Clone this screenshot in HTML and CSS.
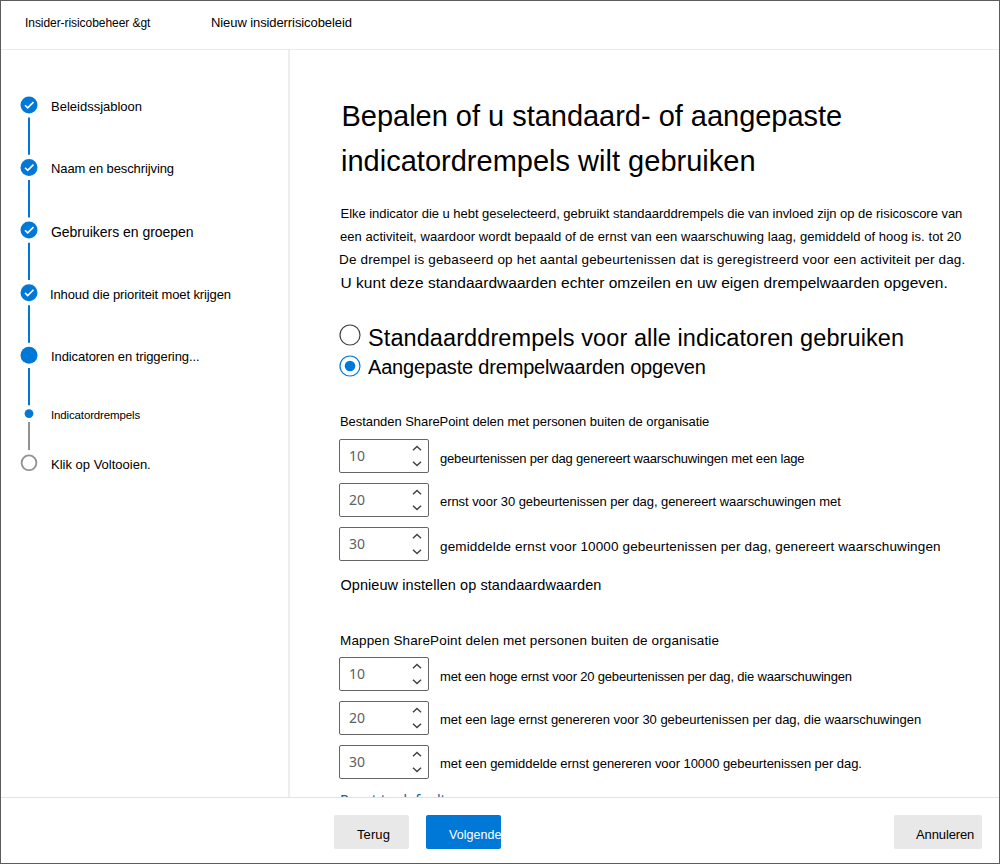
FILE: index.html
```html
<!DOCTYPE html>
<html lang="nl">
<head>
<meta charset="utf-8">
<title>Nieuw insiderrisicobeleid</title>
<link rel="stylesheet" href="styles.css">
</head>
<body>
<div class="frame">
  <header class="top"><span class="t crumb">Insider-risicobeheer &amp;gt</span><span class="t current">Nieuw insiderrisicobeleid</span></header>
  <div class="body">
    <nav class="side">
      <svg class="rail" width="18" height="380" viewBox="20 96 18 380">
        <g fill="#0078d7"><circle cx="29" cy="105" r="8.5"/><circle cx="29" cy="167.5" r="8.5"/><circle cx="29" cy="230" r="8.5"/><circle cx="29" cy="292.7" r="8.5"/><circle cx="29" cy="355.3" r="8.5"/><circle cx="29" cy="413.6" r="4.4"/></g>
        <path d="M29 117.5V154.7M29 180V217.4M29 242.7V280M29 305.2V342.7M29 368V405.2" stroke="#0078d7" stroke-width="2"/>
        <path d="M29 422V450" stroke="#919191" stroke-width="2"/>
        <circle cx="29" cy="462.8" r="7.4" fill="#fff" stroke="#919191" stroke-width="1.8"/>
        <path d="M25 105.2l2.7 2.7 5.8-5.8M25 167.7l2.7 2.7 5.8-5.8M25 230.2l2.7 2.7 5.8-5.8M25 292.9l2.7 2.7 5.8-5.8" fill="none" stroke="#fff" stroke-width="1.6"/>
      </svg>
      <ul class="steps">
        <li><span class="t s1">Beleidssjabloon</span></li>
        <li class="tall"><span class="t s2">Naam en beschrijving</span></li>
        <li class="large"><span class="t s3">Gebruikers en groepen</span></li>
        <li><span class="t s4">Inhoud die prioriteit moet krijgen</span></li>
        <li class="short"><span class="t s5">Indicatoren en triggering...</span></li>
        <li class="sub"><span class="t s6">Indicatordrempels</span></li>
        <li><span class="t s7">Klik op Voltooien.</span></li>
      </ul>
    </nav>
    <main class="main">
      <h1><span class="t h1a">Bepalen of u standaard- of aangepaste</span><br><span class="t h1b">indicatordrempels wilt gebruiken</span></h1>
      <p class="intro">
        <span class="t p1">Elke indicator die u hebt geselecteerd, gebruikt standaarddrempels die van invloed zijn op de risicoscore van</span>
        <span class="t p2">een activiteit, waardoor wordt bepaald of de ernst van een waarschuwing laag, gemiddeld of hoog is. tot 20</span>
        <span class="t p3">De drempel is gebaseerd op het aantal gebeurtenissen dat is geregistreerd voor een activiteit per dag.</span>
        <span class="t p4">U kunt deze standaardwaarden echter omzeilen en uw eigen drempelwaarden opgeven.</span>
      </p>
      <div class="choice"><svg width="22" height="22" viewBox="0 0 22 22"><circle cx="11" cy="11" r="10" fill="#fff" stroke="#444" stroke-width="1.2"/></svg><span class="t r1">Standaarddrempels voor alle indicatoren gebruiken</span></div>
      <div class="choice"><svg width="22" height="22" viewBox="0 0 22 22"><circle cx="11" cy="11" r="10" fill="#fff" stroke="#0078d7" stroke-width="1.2"/><circle cx="11" cy="11" r="5.3" fill="#0078d7"/></svg><span class="t r2">Aangepaste drempelwaarden opgeven</span></div>
      <h2 class="g1"><span class="t q1">Bestanden SharePoint delen met personen buiten de organisatie</span></h2>
      <div class="row"><div class="spin">10<svg width="10" height="22" viewBox="0 0 10 22"><path d="M1 5.3L5 1.5 9 5.3M1 16.7L5 20.5 9 16.7"/></svg></div><span class="t a1">gebeurtenissen per dag genereert waarschuwingen met een lage</span></div>
      <div class="row"><div class="spin">20<svg width="10" height="22" viewBox="0 0 10 22"><path d="M1 5.3L5 1.5 9 5.3M1 16.7L5 20.5 9 16.7"/></svg></div><span class="t a2">ernst voor 30 gebeurtenissen per dag, genereert waarschuwingen met</span></div>
      <div class="row"><div class="spin">30<svg width="10" height="22" viewBox="0 0 10 22"><path d="M1 5.3L5 1.5 9 5.3M1 16.7L5 20.5 9 16.7"/></svg></div><span class="t a3">gemiddelde ernst voor 10000 gebeurtenissen per dag, genereert waarschuwingen</span></div>
      <div class="reset"><span class="t z1">Opnieuw instellen op standaardwaarden</span></div>
      <h2 class="g2"><span class="t q2">Mappen SharePoint delen met personen buiten de organisatie</span></h2>
      <div class="row"><div class="spin">10<svg width="10" height="22" viewBox="0 0 10 22"><path d="M1 5.3L5 1.5 9 5.3M1 16.7L5 20.5 9 16.7"/></svg></div><span class="t b1">met een hoge ernst voor 20 gebeurtenissen per dag, die waarschuwingen</span></div>
      <div class="row"><div class="spin">20<svg width="10" height="22" viewBox="0 0 10 22"><path d="M1 5.3L5 1.5 9 5.3M1 16.7L5 20.5 9 16.7"/></svg></div><span class="t b2">met een lage ernst genereren voor 30 gebeurtenissen per dag, die waarschuwingen</span></div>
      <div class="row"><div class="spin">30<svg width="10" height="22" viewBox="0 0 10 22"><path d="M1 5.3L5 1.5 9 5.3M1 16.7L5 20.5 9 16.7"/></svg></div><span class="t b3">met een gemiddelde ernst genereren voor 10000 gebeurtenissen per dag.</span></div>
      <div class="link">Reset to defaults</div>
    </main>
  </div>
  <footer class="foot">
    <div class="btn back"><span class="t f1">Terug</span></div>
    <div class="btn next"><span class="t f2">Volgende</span></div>
    <div class="btn cancel"><span class="t f3">Annuleren</span></div>
  </footer>
</div>
</body>
</html>
```
FILE: styles.css
```css
* { box-sizing: border-box; }
body { margin: 0; background: #fff; color: #000; font: 13px/20px "Liberation Sans", Arial, sans-serif; }
.frame { width: 1000px; height: 864px; border: 1px solid #5c5c5c; display: flex; flex-direction: column; overflow: hidden; }
.t { white-space: pre; }

.top { height: 49px; flex: none; border-bottom: 1px solid #eaeaea; display: flex; padding: 12px 0 0 24px; }
.crumb { width: 186px; font-size: 12px; letter-spacing: -0.06px; }
.current { letter-spacing: -0.09px; }

.body { height: 747px; flex: none; display: flex; overflow: hidden; }
.side { width: 289px; flex: none; border-right: 2px solid #eee; display: flex; padding: 46px 0 0 19px; }
.rail { flex: none; }
.steps { list-style: none; margin: 0; padding: 1px 0 0 13px; }
.steps li { height: 62px; }
.steps .tall { height: 63px; }
.steps .large { height: 63px; }
.steps .short { height: 58px; }
.steps .sub { height: 50px; }
.s2 { letter-spacing: -0.1px; }
.s3 { display: block; font-size: 14px; letter-spacing: -0.03px; }
.s4 { letter-spacing: -0.12px; margin-left: -1px; }
.s5 { letter-spacing: -0.09px; }
.s6 { font-size: 11.5px; letter-spacing: -0.14px; }

.main { flex: 1; padding: 44px 0 0 50px; }
h1 { margin: 0 0 0 1px; font-size: 29px; line-height: 45px; font-weight: 400; height: 108px; }
.h1a { letter-spacing: -0.02px; margin-left: 0.5px; }
.h1b { letter-spacing: 0.01px; }
.intro { margin: 0; height: 122px; line-height: 23px; }
.intro .t { display: block; }
.p1 { letter-spacing: -0.03px; margin-left: 0.5px; }
.p2 { letter-spacing: 0.06px; }
.p3 { font-size: 13.5px; letter-spacing: 0.16px; margin-left: -1px; }
.p4 { font-size: 15.5px; letter-spacing: 0.03px; margin-left: 0.5px; }

.choice { display: flex; height: 31px; gap: 7px; margin-left: -1px; }
.r1 { font-size: 23.5px; line-height: 28px; letter-spacing: 0.09px; }
.r2 { font-size: 20px; line-height: 24px; letter-spacing: -0.18px; }

h2 { margin: 0; font-size: 13px; font-weight: 400; }
.g1 { margin-top: 26px; height: 27px; }
.g2 { margin-top: 20px; height: 26px; }
.q1 { letter-spacing: -0.06px; }
.q2 { font-size: 13.5px; letter-spacing: 0.13px; }
.row { display: flex; height: 44px; gap: 11px; margin-left: -1px; }
.row .t { padding-top: 9px; }
.row .a1, .row .a3, .row .b1 { padding-top: 10px; }
.a1, .b1 { letter-spacing: -0.18px; }
.a2 { letter-spacing: -0.06px; }
.a3 { font-size: 13.5px; letter-spacing: 0.14px; }
.b2 { letter-spacing: -0.02px; }
.b3 { letter-spacing: -0.055px; }
.spin { width: 90px; height: 34px; border: 1px solid #666; border-radius: 2px; display: flex; justify-content: space-between; align-items: center; padding: 0 6px 0 9px; font: 14px/20px "Noto Sans", sans-serif; color: #606060; }
.spin path { fill: none; stroke: #444; stroke-width: 1.5; }
.reset { height: 40px; padding: 4px 0 0 0.5px; }
.z1 { font-size: 14.5px; letter-spacing: 0.06px; }
.link { color: #1b5e94; font: 14.3px/20px "Noto Sans", sans-serif; padding-top: 1px; }

.foot { flex: 1; border-top: 1px solid #e3e3e3; display: flex; padding: 17px 17px 0 333px; }
.btn { height: 34px; background: #e8e8e8; border-radius: 2px; width: 75px; padding: 10px 0 0 23px; margin-right: 17px; overflow: hidden; }
.next { background: #0078d7; color: #fff; }
.f1 { letter-spacing: 0.1px; }
.f2 { font-size: 12.5px; letter-spacing: 0.03px; }
.f3 { letter-spacing: -0.12px; }
.cancel { width: 88px; padding-left: 22px; margin: 0 0 0 auto; }
```
